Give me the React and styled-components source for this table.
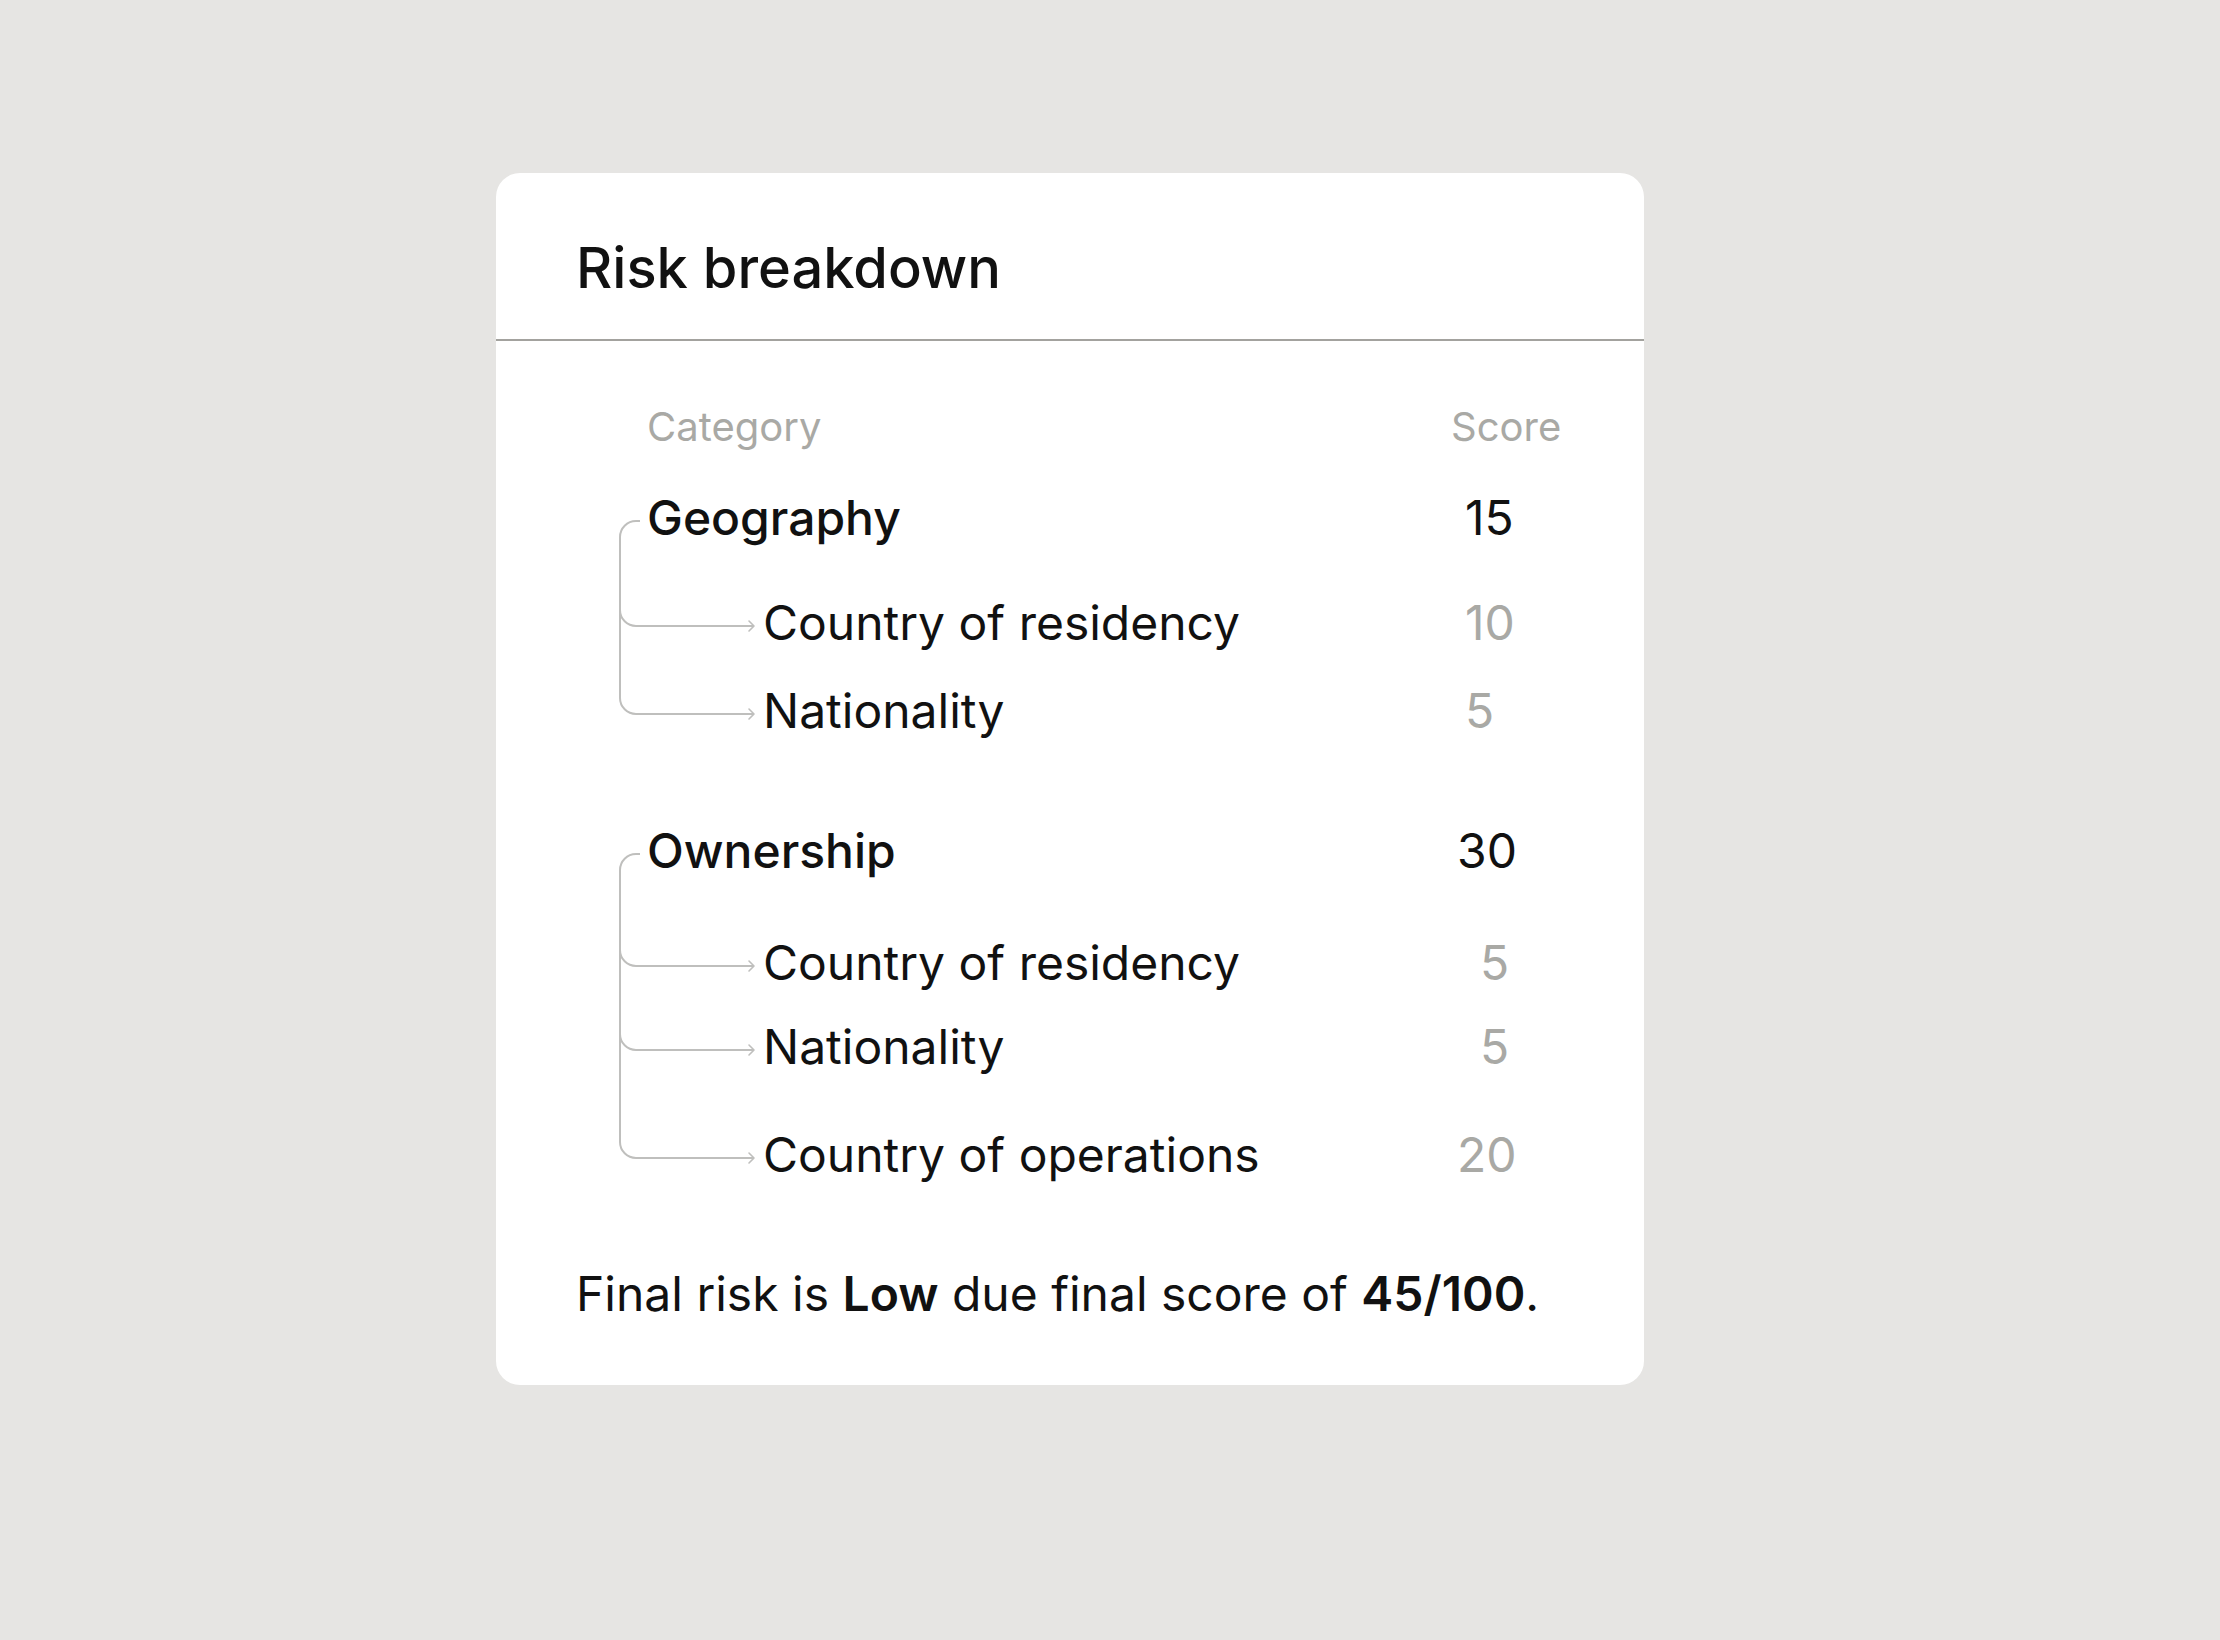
import React from 'react'
import styled, { createGlobalStyle } from 'styled-components'

const GlobalStyle = createGlobalStyle`
  html, body {
    margin: 0;
    padding: 0;
    background: #e6e5e3;
  }
  body {
    font-family: Inter, "Noto Sans", sans-serif;
    color: #111;
  }
`

const Page = styled.div`
  min-height: 1640px;
  padding-top: 173px;
  padding-left: 496px;
  box-sizing: border-box;
`

const Card = styled.section`
  width: 1148px;
  background: #fff;
  border-radius: 24px;
  overflow: hidden;
`

const Header = styled.header`
  padding: 61px 80px 37px;
  border-bottom: 2px solid #a3a29e;
`

const Title = styled.h1`
  margin: 0;
  font-size: 56px;
  line-height: 68px;
  font-weight: 500;
  color: #111;
`

const Body = styled.div`
  padding: 60px 80px 65px;
`

const HeadRow = styled.div`
  display: flex;
  padding-left: 71px;
  font-size: 40px;
  line-height: 52px;
  color: #a9a9a5;
`

const HeadLabel = styled.div`
  flex: 1;
`

const HeadScore = styled.div`
  width: 124px;
  padding-left: 11px;
  box-sizing: border-box;
`

const Group = styled.div`
  display: flex;
  flex-direction: column;
`

const Row = styled.div`
  display: flex;
  align-items: flex-end;
  font-size: 48px;
  line-height: 52px;
`

const Label = styled.div`
  flex: 1;
  font-weight: ${(p) => (p.$parent ? 500 : 400)};
  color: #111;
`

const Score = styled.div`
  width: 124px;
  box-sizing: border-box;
  padding-left: ${(p) => p.$indent}px;
  color: ${(p) => (p.$parent ? '#111' : '#a9a9a5')};
`

const Summary = styled.p`
  margin: 87px 0 0;
  font-size: 48px;
  line-height: 52px;
  color: #111;
  b {
    font-weight: 600;
  }
`

const Svg = styled.svg`
  flex: none;
  display: block;
  overflow: visible;
`

const LINE = '#bfbfbd'

function Connector({ kind, pad }) {
  const h = pad + 52
  const y = pad + 29
  const parent = kind === 'parent'
  const w = parent ? 71 : 187
  let d
  if (parent) {
    d = `M 64 ${y} H 60 A 16 16 0 0 0 44 ${y + 16} V ${h}`
  } else if (kind === 'last') {
    d = `M 44 0 V ${y - 16} A 16 16 0 0 0 60 ${y} H 178`
  } else {
    d = `M 44 0 V ${h} M 44 ${y - 16} A 16 16 0 0 0 60 ${y} H 178`
  }
  return (
    <Svg width={w} height={h} viewBox={`0 0 ${w} ${h}`}>
      <path d={d} fill="none" stroke={LINE} strokeWidth="2" />
      {!parent && (
        <path
          d={`M 173 ${y - 5} L 178 ${y} L 173 ${y + 5}`}
          fill="none"
          stroke={LINE}
          strokeWidth="1.6"
          strokeLinecap="round"
          strokeLinejoin="round"
        />
      )}
    </Svg>
  )
}

const groups = [
  {
    name: 'Geography',
    pad: 39,
    score: 15,
    indent: 25,
    items: [
      { name: 'Country of residency', score: 10, pad: 53, indent: 25 },
      { name: 'Nationality', score: 5, pad: 36, indent: 25 },
    ],
  },
  {
    name: 'Ownership',
    pad: 88,
    score: 30,
    indent: 17,
    items: [
      { name: 'Country of residency', score: 5, pad: 60, indent: 40 },
      { name: 'Nationality', score: 5, pad: 32, indent: 40 },
      { name: 'Country of operations', score: 20, pad: 56, indent: 17 },
    ],
  },
]

export default function App() {
  return (
    <>
      <GlobalStyle />
      <Page>
        <Card>
          <Header>
            <Title>Risk breakdown</Title>
          </Header>
          <Body>
            <HeadRow>
              <HeadLabel>Category</HeadLabel>
              <HeadScore>Score</HeadScore>
            </HeadRow>
            {groups.map((g) => (
              <Group key={g.name}>
                <Row>
                  <Connector kind="parent" pad={g.pad} />
                  <Label $parent>{g.name}</Label>
                  <Score $parent $indent={g.indent}>{g.score}</Score>
                </Row>
                {g.items.map((it, i) => (
                  <Row key={it.name}>
                    <Connector kind={i === g.items.length - 1 ? 'last' : 'mid'} pad={it.pad} />
                    <Label>{it.name}</Label>
                    <Score $indent={it.indent}>{it.score}</Score>
                  </Row>
                ))}
              </Group>
            ))}
            <Summary>
              Final risk is <b>Low</b> due final score of <b>45/100</b>.
            </Summary>
          </Body>
        </Card>
      </Page>
    </>
  )
}
